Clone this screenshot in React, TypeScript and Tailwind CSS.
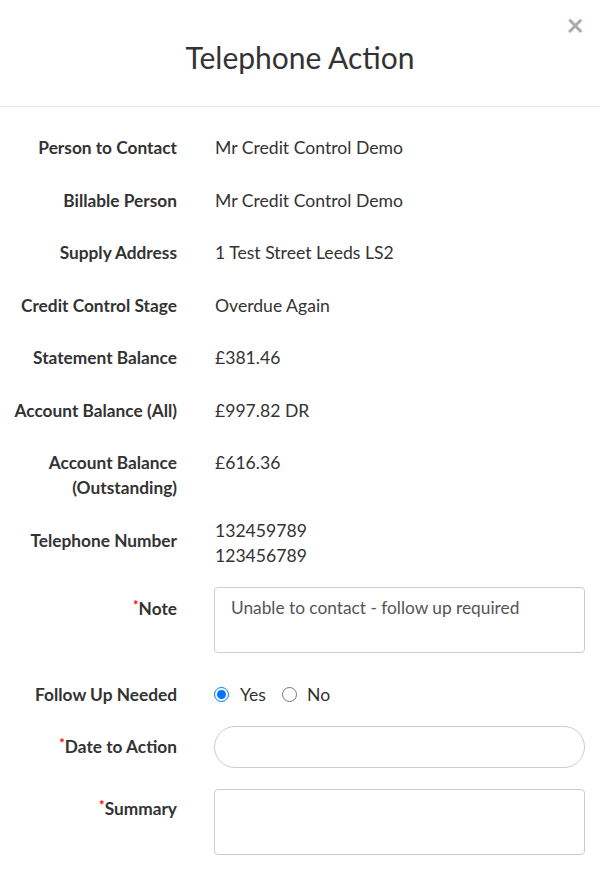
import { useState } from "react";

const labelCls =
  "w-[177px] shrink-0 text-right font-bold text-[17.3px] leading-[25px] text-[#333]";
const valueCls = "ml-[38px] text-[17.6px] leading-[25px] text-[#333]";

function Req() {
  return <span className="relative -top-[5px] text-[13px] text-[#f00]">*</span>;
}

function InfoRow({ label, children, mt }: { label: React.ReactNode; children: React.ReactNode; mt: string }) {
  return (
    <div className={`flex ${mt}`}>
      <div className={labelCls}>{label}</div>
      <div className={valueCls}>{children}</div>
    </div>
  );
}

export default function App() {
  const [follow, setFollow] = useState<"yes" | "no">("yes");

  return (
    <div className="w-[600px] h-[871px] bg-white font-['Lato','Noto_Sans',sans-serif] text-[#333] overflow-hidden">
      <div className="relative h-[107px] border-b border-[#e5e5e5] flex items-center justify-center">
        <h1 className="text-[30px] leading-[34px] text-[#333] mt-[7px]">Telephone Action</h1>
        <button className="absolute right-[16px] top-[10px] text-[#aaa] text-[30px] leading-[28px] font-bold">
          ×
        </button>
      </div>

      <div className="pt-[27.5px]">
        <InfoRow label="Person to Contact" mt="mt-0">Mr Credit Control Demo</InfoRow>
        <InfoRow label="Billable Person" mt="mt-[28px]">Mr Credit Control Demo</InfoRow>
        <InfoRow label="Supply Address" mt="mt-[27px]">1 Test Street Leeds LS2</InfoRow>
        <InfoRow label="Credit Control Stage" mt="mt-[28px]">Overdue Again</InfoRow>
        <InfoRow label="Statement Balance" mt="mt-[27px]">£381.46</InfoRow>
        <InfoRow label="Account Balance (All)" mt="mt-[28px]">£997.82 DR</InfoRow>
        <InfoRow
          label={
            <>
              Account Balance
              <br />
              (Outstanding)
            </>
          }
          mt="mt-[27px]"
        >
          £616.36
        </InfoRow>

        <div className="flex mt-[18px]">
          <div className={`${labelCls} pt-[10px]`}>Telephone Number</div>
          <div className={valueCls}>
            132459789
            <br />
            123456789
          </div>
        </div>

        <div className="flex mt-[19.5px]">
          <div className={`${labelCls} pt-[8.5px]`}>
            <Req />
            Note
          </div>
          <textarea
            defaultValue="Unable to contact - follow up required"
            className="ml-[37px] w-[371px] h-[66px] border border-[#ccc] rounded-[4px] px-[16px] pt-[7px] text-[17.3px] leading-[25px] text-[#555] resize-none outline-none"
          />
        </div>

        <div className="flex mt-[29px] items-center">
          <div className={labelCls}>Follow Up Needed</div>
          <div className="ml-[37px] flex items-center text-[17.6px] leading-[25px] text-[#333]">
            <label className="flex items-center">
              <input
                type="radio"
                name="follow"
                checked={follow === "yes"}
                onChange={() => setFollow("yes")}
                className="w-[15px] h-[15px] m-0 accent-[#0075ff]"
              />
              <span className="ml-[11px]">Yes</span>
            </label>
            <label className="flex items-center ml-[16px]">
              <input
                type="radio"
                name="follow"
                checked={follow === "no"}
                onChange={() => setFollow("no")}
                className="w-[15px] h-[15px] m-0 accent-[#0075ff]"
              />
              <span className="ml-[10px]">No</span>
            </label>
          </div>
        </div>

        <div className="flex mt-[19px] items-center">
          <div className={labelCls}>
            <Req />
            Date to Action
          </div>
          <input
            type="text"
            className="ml-[37px] w-[371px] h-[42px] border border-[#ccc] rounded-full px-[16px] text-[17.6px] outline-none"
          />
        </div>

        <div className="flex mt-[20.5px]">
          <div className={`${labelCls} pt-[7.5px]`}>
            <Req />
            Summary
          </div>
          <textarea className="ml-[37px] w-[371px] h-[66px] border border-[#ccc] rounded-[4px] px-[16px] pt-[8px] text-[17.6px] leading-[25px] text-[#555] resize-none outline-none" />
        </div>
      </div>
    </div>
  );
}
